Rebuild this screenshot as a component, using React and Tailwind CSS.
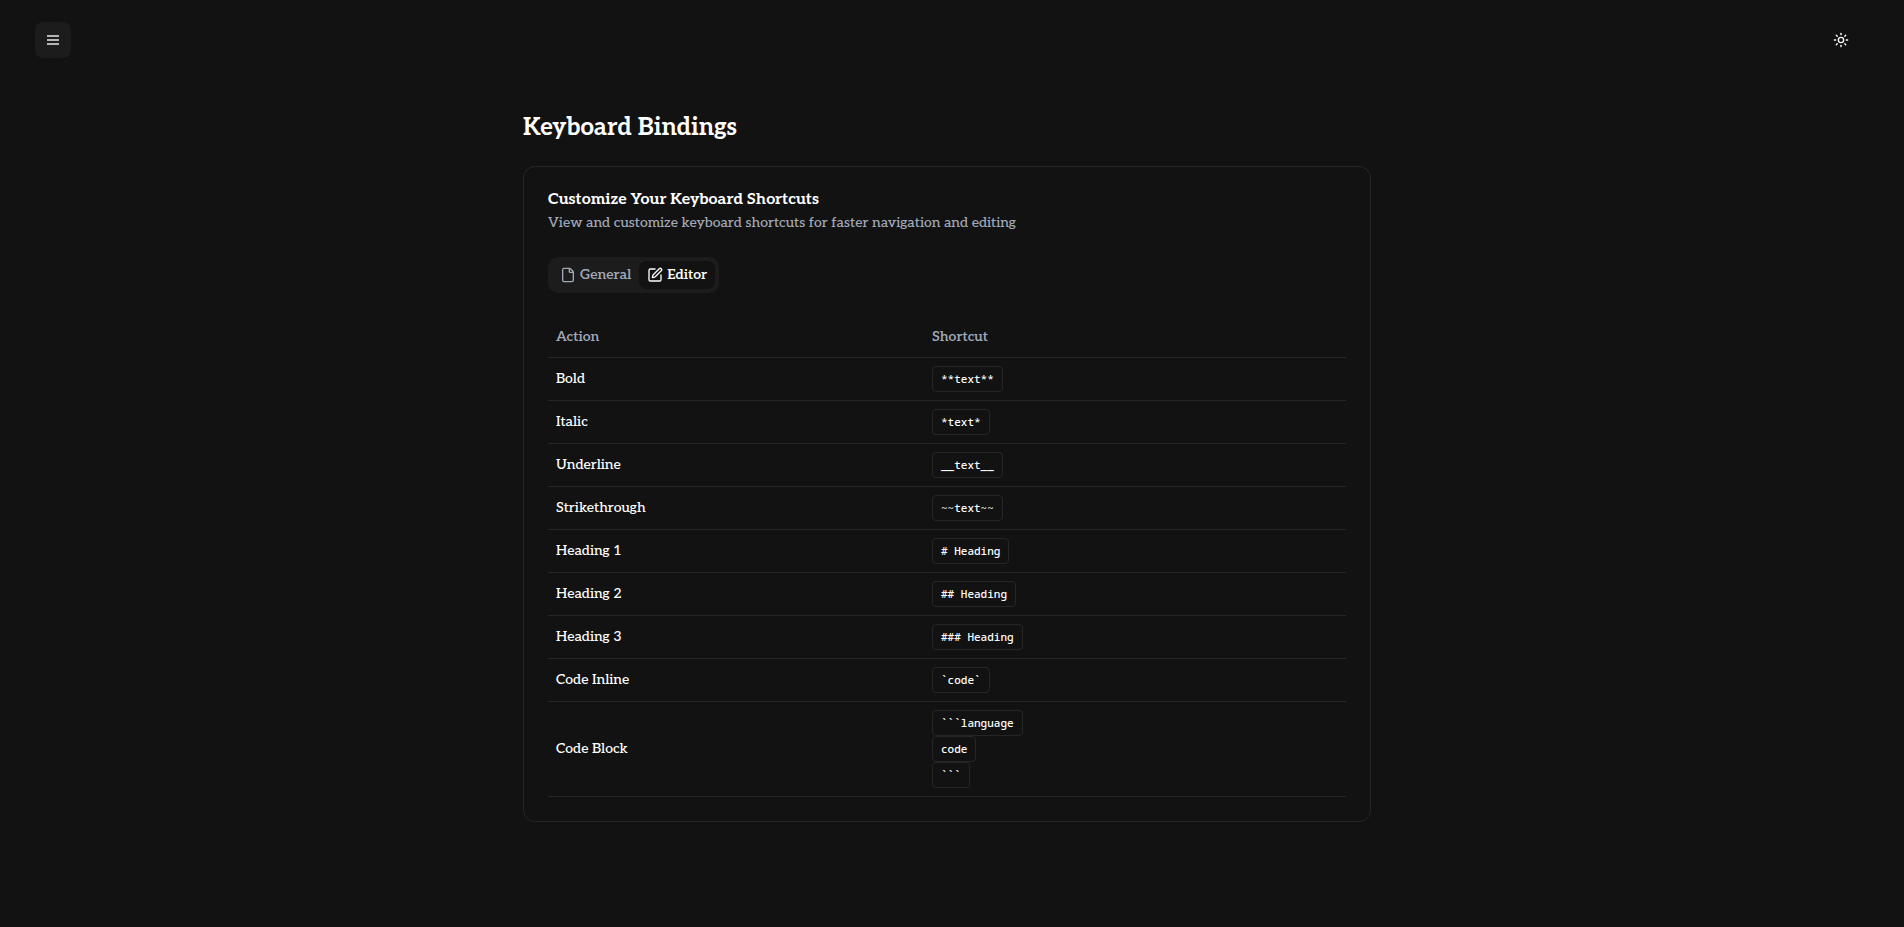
import { useState } from "react";
import { File, SquarePen, Sun } from "lucide-react";

const SHORTCUTS = {
  general: [
    { action: "Open Menu", keys: ["Ctrl + M"] },
    { action: "Toggle Theme", keys: ["Ctrl + D"] },
  ],
  editor: [
    { action: "Bold", keys: ["**text**"] },
    { action: "Italic", keys: ["*text*"] },
    { action: "Underline", keys: ["__text__"] },
    { action: "Strikethrough", keys: ["~~text~~"] },
    { action: "Heading 1", keys: ["# Heading"] },
    { action: "Heading 2", keys: ["## Heading"] },
    { action: "Heading 3", keys: ["### Heading"] },
    { action: "Code Inline", keys: ["`code`"] },
    { action: "Code Block", keys: ["```language", "code", "```"] },
  ],
};

const TABS = [
  { id: "general", label: "General", Icon: File },
  { id: "editor", label: "Editor", Icon: SquarePen },
];

function Header() {
  return (
    <header className="flex items-center justify-between px-[35px] pt-[22px]">
      <button
        type="button"
        aria-label="Open menu"
        className="flex size-9 items-center justify-center rounded-lg bg-[#1c1c1c] text-[#b4b4b4]"
      >
        <svg viewBox="0 0 16 16" className="size-4" fill="currentColor" aria-hidden="true">
          <path d="M2 3h12v2H2zM2 7h12v2H2zM2 11h12v2H2z" />
        </svg>
      </button>
      <button
        type="button"
        aria-label="Toggle theme"
        className="flex size-9 items-center justify-center rounded-lg text-white"
      >
        <Sun className="size-4" />
      </button>
    </header>
  );
}

function Tabs({ active, onChange }) {
  return (
    <div role="tablist" className="inline-flex h-9 items-center rounded-[10px] bg-[#1c1c1c] p-1">
      {TABS.map(({ id, label, Icon }) => (
        <button
          key={id}
          type="button"
          role="tab"
          aria-selected={active === id}
          onClick={() => onChange(id)}
          className={
            active === id
              ? "flex h-7 items-center gap-1 rounded-lg bg-[#121212] px-2 text-sm font-semibold text-white"
              : "flex h-7 items-center gap-1 rounded-lg px-2 text-sm font-semibold text-[#a1a9b8]"
          }
        >
          <Icon className="size-4" />
          {label}
        </button>
      ))}
    </div>
  );
}

function ShortcutTable({ rows }) {
  return (
    <table className="w-full text-sm">
      <thead>
        <tr className="h-10 border-b border-[#262626] text-left text-[#a1a9b8]">
          <th scope="col" className="w-[376px] px-2 font-semibold">Action</th>
          <th scope="col" className="px-2 font-semibold">Shortcut</th>
        </tr>
      </thead>
      <tbody>
        {rows.map(({ action, keys }) => (
          <tr key={action} className="border-b border-[#262626]">
            <td className="p-2 font-medium">{action}</td>
            <td className="p-2">
              <div className="flex flex-col items-start">
                {keys.map((key) => (
                  <kbd
                    key={key}
                    className="rounded border border-[#262626] px-2 py-1 font-['Noto_Sans_Mono','DejaVu_Sans_Mono',monospace] text-[11px] leading-4 font-medium"
                  >
                    {key}
                  </kbd>
                ))}
              </div>
            </td>
          </tr>
        ))}
      </tbody>
    </table>
  );
}

export default function App() {
  const [tab, setTab] = useState("editor");

  return (
    <div className="min-h-screen bg-[#121212] pr-2.5 font-['Roboto_Slab','Aleo','Noto_Serif','DejaVu_Serif_Condensed',serif] text-white">
      <Header />
      <main className="mx-auto max-w-4xl px-6 pt-[54px] pb-6">
        <h1 className="mb-[22px] text-2xl font-bold">Keyboard Bindings</h1>
        <section className="rounded-xl border border-[#262626] p-6">
          <h2 className="mb-1 text-base leading-[18px] font-bold">
            Customize Your Keyboard Shortcuts
          </h2>
          <p className="mb-6 text-sm font-medium text-[#a1a9b8]">
            View and customize keyboard shortcuts for faster navigation and editing
          </p>
          <div className="mb-6 flex">
            <Tabs active={tab} onChange={setTab} />
          </div>
          <ShortcutTable rows={SHORTCUTS[tab]} />
        </section>
      </main>
    </div>
  );
}
